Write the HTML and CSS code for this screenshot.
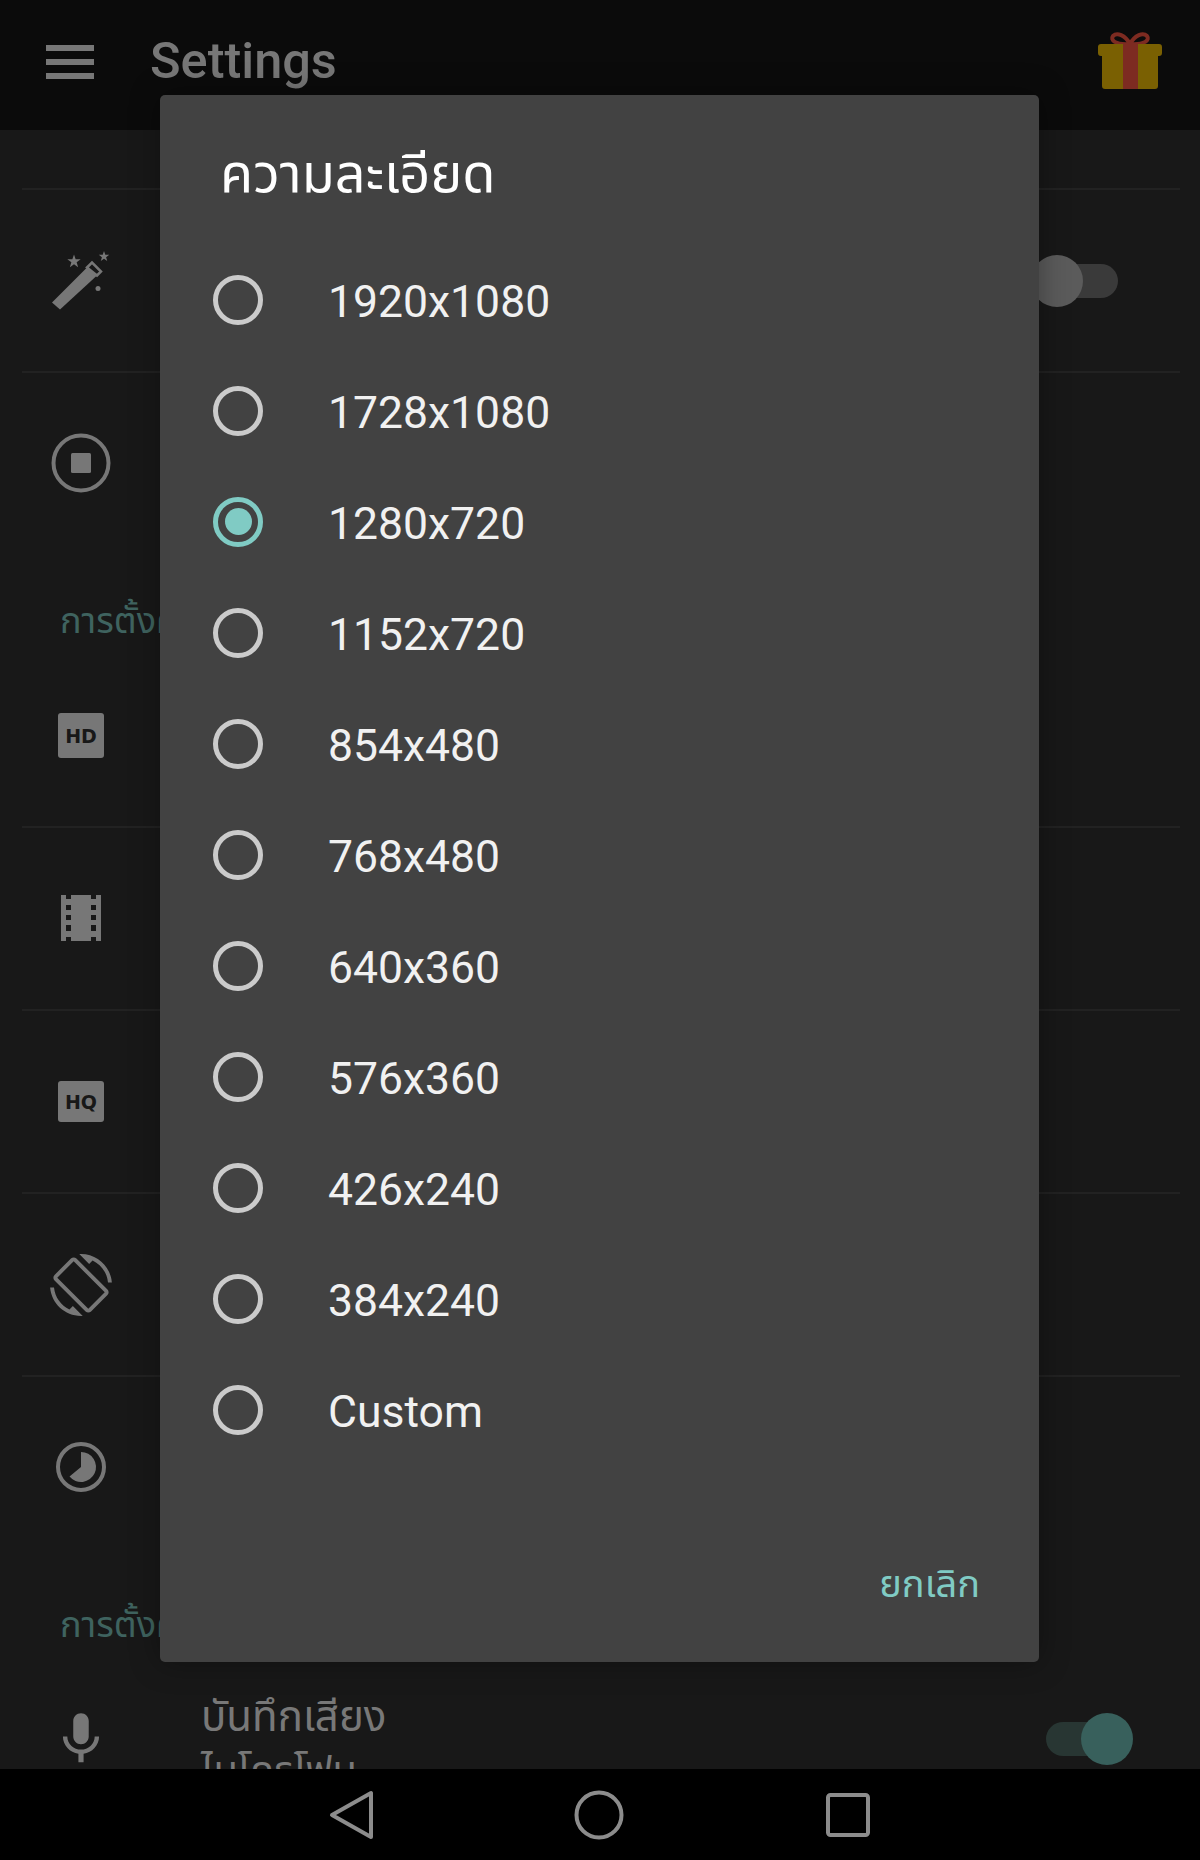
FILE: index.html
```html
<!DOCTYPE html>
<html lang="th">
<head>
<meta charset="utf-8">
<title>Settings</title>
<link rel="stylesheet" href="styles.css">
</head>
<body>
<div class="screen">
  <header class="appbar">
    <div class="menu"><span></span><span></span><span></span></div>
    <h1 class="appbar-title">Settings</h1>
    <svg class="gift" viewBox="0 0 64 57">
      <path class="ribbon-line" d="M32 12C27 3 19 0 15 4c-3 4 2 9 17 8zM32 12c5-9 13-12 17-8 3 4-2 9-17 8z"/>
      <path class="gift-gold" d="M3 12h58a3 3 0 0 1 3 3v6a3 3 0 0 1-3 3h-1v30a3 3 0 0 1-3 3H7a3 3 0 0 1-3-3V24H3a3 3 0 0 1-3-3v-6a3 3 0 0 1 3-3z"/>
      <rect class="gift-red" x="25" y="12" width="15" height="45"/>
    </svg>
  </header>

  <main class="list">
    <div class="row row-top"></div>
    <div class="row">
      <div class="icon-slot">
        <svg class="icon" viewBox="0 0 62 62">
          <path d="M2 52.500 10 59.500 47 25.500 37 17.500z"/>
          <path class="wand-tip" d="M37 17.500 42 12.500 51 21.500 47 25.500z"/>
          <path d="M24 4.500 25.650 9.230 30.660 9.340 26.660 12.370 28.110 17.160 24 14.300 19.890 17.160 21.340 12.370 17.340 9.340 22.350 9.230z"/>
          <path d="M54 1 55.290 4.720 59.230 4.800 56.090 7.180 57.230 10.950 54 8.700 50.770 10.950 51.910 7.180 48.770 4.800 52.710 4.720z"/>
          <circle cx="48" cy="38.500" r="2.500"/>
        </svg>
      </div>
      <div class="switch"><span class="thumb thumb-off"></span></div>
    </div>
    <div class="row row-plain">
      <div class="icon-slot">
        <svg class="icon" viewBox="0 0 62 62">
          <circle class="ring" cx="31" cy="31" r="27.500"/>
          <rect x="21" y="21" width="20" height="20" rx="1.500"/>
        </svg>
      </div>
    </div>
    <div class="section">การตั้งค่าวิดีโอ</div>
    <div class="row">
      <div class="icon-slot"><span class="badge badge-hd">HD</span></div>
    </div>
    <div class="row">
      <div class="icon-slot">
        <svg class="icon" viewBox="0 0 62 62">
          <path fill-rule="evenodd" d="M11 7h40v46H11zM16 7v4h5V7zM41 7v4h5V7zM16 17v5h5v-5zM41 17v5h5v-5zM16 27v5h5v-5zM41 27v5h5v-5zM16 37v6h5v-6zM41 37v6h5v-6zM16 49v4h5v-4zM41 49v4h5v-4z"/>
        </svg>
      </div>
    </div>
    <div class="row">
      <div class="icon-slot"><span class="badge badge-hq">HQ</span></div>
    </div>
    <div class="row">
      <div class="icon-slot">
        <svg class="icon" viewBox="0 0 24 24">
          <path d="M16.480 2.520c3.270 1.550 5.610 4.720 5.970 8.480h1.500C23.440 4.840 18.290 0 12 0l-.66.03 3.810 3.810 1.330-1.320zm-6.250-.77c-.59-.59-1.540-.59-2.120 0L1.750 8.110c-.59.59-.59 1.540 0 2.120l12.020 12.020c.59.59 1.540.59 2.120 0l6.360-6.360c.59-.59.59-1.540 0-2.120L10.230 1.750zm4.600 19.440L2.810 9.170l6.360-6.360 12.020 12.020-6.360 6.360zm-7.310.29C4.250 19.940 1.910 16.760 1.550 13H.05C.56 19.160 5.710 24 12 24l.66-.03-3.810-3.810-1.330 1.320z"/>
        </svg>
      </div>
    </div>
    <div class="row row-plain">
      <div class="icon-slot">
        <svg class="icon" viewBox="0 0 62 62">
          <circle class="ring" cx="31" cy="31" r="23"/>
          <path d="M31 16a15 15 0 1 1-11.500 24.600L31 31z"/>
        </svg>
      </div>
    </div>
    <div class="section">การตั้งค่าเสียง</div>
    <div class="row row-plain">
      <div class="icon-slot">
        <svg class="icon" viewBox="0 0 24 24">
          <path d="M12 14c1.660 0 2.990-1.340 2.990-3L15 5c0-1.660-1.340-3-3-3S9 3.340 9 5v6c0 1.660 1.340 3 3 3zm5.300-3c0 3-2.540 5.100-5.300 5.100S6.700 14 6.700 11H5c0 3.410 2.720 6.230 6 6.720V21h2v-3.280c3.280-.48 6-3.300 6-6.720h-1.700z"/>
        </svg>
      </div>
      <div class="row-text">
        <div class="row-title">บันทึกเสียง</div>
        <div class="row-sub">ไมโครโฟน</div>
      </div>
      <div class="switch switch-on"><span class="thumb thumb-on"></span></div>
    </div>
  </main>

  <nav class="navbar">
    <svg class="nav-back" viewBox="0 0 46 50"><path d="M43 3v44L4 25z"/></svg>
    <svg class="nav-home" viewBox="0 0 50 50"><circle cx="25" cy="25" r="22.500"/></svg>
    <svg class="nav-recent" viewBox="0 0 44 44"><rect x="2" y="2" width="40" height="40" rx="2.500"/></svg>
  </nav>

  <section class="dialog">
    <h2 class="dialog-title">ความละเอียด</h2>
    <div class="options">
      <div class="option"><span class="radio"></span><span class="option-label">1920x1080</span></div>
      <div class="option"><span class="radio"></span><span class="option-label">1728x1080</span></div>
      <div class="option"><span class="radio radio-on"></span><span class="option-label">1280x720</span></div>
      <div class="option"><span class="radio"></span><span class="option-label">1152x720</span></div>
      <div class="option"><span class="radio"></span><span class="option-label">854x480</span></div>
      <div class="option"><span class="radio"></span><span class="option-label">768x480</span></div>
      <div class="option"><span class="radio"></span><span class="option-label">640x360</span></div>
      <div class="option"><span class="radio"></span><span class="option-label">576x360</span></div>
      <div class="option"><span class="radio"></span><span class="option-label">426x240</span></div>
      <div class="option"><span class="radio"></span><span class="option-label">384x240</span></div>
      <div class="option"><span class="radio"></span><span class="option-label">Custom</span></div>
    </div>
    <div class="actions"><span class="cancel">ยกเลิก</span></div>
  </section>
</div>
</body>
</html>
```
FILE: styles.css
```css
* { box-sizing: border-box; }
html, body { margin: 0; padding: 0; background: #000; }
body { font-family: Roboto, "Noto Sans", "Noto Sans Thai", "Noto Sans CJK SC", sans-serif; }

.screen {
  position: relative;
  width: 1200px;
  height: 1860px;
  display: flex;
  flex-direction: column;
  overflow: hidden;
  background: #181818;
}

.appbar {
  flex: 0 0 130px;
  display: flex;
  align-items: center;
  background: #0b0b0b;
  padding: 0 38px 6px 46px;
}
.menu { width: 48px; display: flex; flex-direction: column; gap: 8px; }
.menu span { display: block; height: 6px; background: #777; }
.appbar-title { margin: 0 0 2px 56px; font-size: 50.500px; font-weight: 500; color: #777; line-height: 1; }
.gift { width: 64px; height: 57px; margin: 0 0 3px auto; overflow: visible; }
.gift-gold { fill: #7a6002; }
.gift-red { fill: #7d2b21; }
.ribbon-line { fill: none; stroke: #7d2b21; stroke-width: 4; }

.list { flex: 1; min-height: 0; overflow: hidden; }
.row {
  height: 183px;
  margin: 0 20px 0 22px;
  padding: 0 62px 0 28px;
  display: flex;
  align-items: center;
  border-bottom: 2px solid #222;
}
.row-top { height: 60px; }
.row-plain { height: 179px; border-bottom: 0; }
.icon-slot { width: 62px; height: 62px; display: flex; align-items: center; justify-content: center; flex: none; }
.icon { width: 62px; height: 62px; fill: #777; overflow: visible; }
.ring { fill: none; stroke: #777; stroke-width: 4; }
.wand-tip { fill: #181818; stroke: #777; stroke-width: 2.500; }

.badge {
  width: 46px;
  display: flex;
  align-items: center;
  justify-content: center;
  border-radius: 3px;
  background: #777;
  color: #181818;
  font-family: "DejaVu Sans", sans-serif;
  font-weight: 700;
  font-size: 19px;
}
.badge-hd { height: 45px; }
.badge-hq { height: 41px; }

.section {
  height: 93px;
  margin-left: 60px;
  display: flex;
  align-items: center;
  padding-top: 47px;
  font-size: 36px;
  color: #3f635f;
  white-space: nowrap;
}

.row-text { margin-left: 89px; color: #787878; padding-top: 14px; }
.row-title { font-size: 42px; line-height: 50px; }
.row-sub { font-size: 40px; line-height: 58px; }

.switch { position: relative; width: 70px; height: 34px; margin-left: auto; border-radius: 17px; background: #3a3a3a; }
.switch-on { width: 72px; background: #283633; }
.thumb { position: absolute; top: -9px; width: 52px; height: 52px; border-radius: 50%; }
.thumb-off { left: -17px; background: #5b5b5b; }
.thumb-on { right: -15px; background: #38605c; }

.navbar {
  flex: 0 0 91px;
  background: #000;
  display: flex;
  align-items: center;
  padding-left: 328px;
}
.navbar svg { fill: none; stroke: #8c8c8c; stroke-width: 4; stroke-linejoin: round; }
.nav-back { width: 46px; height: 50px; margin-right: 200px; }
.nav-home { width: 50px; height: 50px; margin-right: 202px; }
.nav-recent { width: 44px; height: 44px; }

.dialog {
  position: absolute;
  left: 160px;
  top: 95px;
  width: 879px;
  height: 1567px;
  background: #424242;
  border-radius: 5px;
  box-shadow: 0 0 30px rgba(0, 0, 0, .35);
  display: flex;
  flex-direction: column;
}
.dialog-title {
  margin: 0;
  height: 149px;
  padding: 49px 0 0 60px;
  font-size: 54px;
  line-height: 60px;
  font-weight: 400;
  color: #fff;
}
.options { display: flex; flex-direction: column; }
.option {
  height: 111px;
  padding-left: 53px;
  display: flex;
  align-items: center;
  gap: 65px;
  font-size: 44.500px;
  color: #f1f1f1;
}
.option-label { padding-top: 5px; }
.radio {
  width: 50px;
  height: 50px;
  border: 5px solid #cbcbcb;
  border-radius: 50%;
  flex: none;
  display: flex;
  align-items: center;
  justify-content: center;
}
.radio-on { border-color: #80cbc4; }
.radio-on::after { content: ""; width: 27px; height: 27px; border-radius: 50%; background: #80cbc4; }
.actions {
  flex: 1;
  display: flex;
  align-items: center;
  justify-content: flex-end;
  padding: 44px 59px 0 0;
}
.cancel { font-size: 38px; color: #80cbc4; }
```
